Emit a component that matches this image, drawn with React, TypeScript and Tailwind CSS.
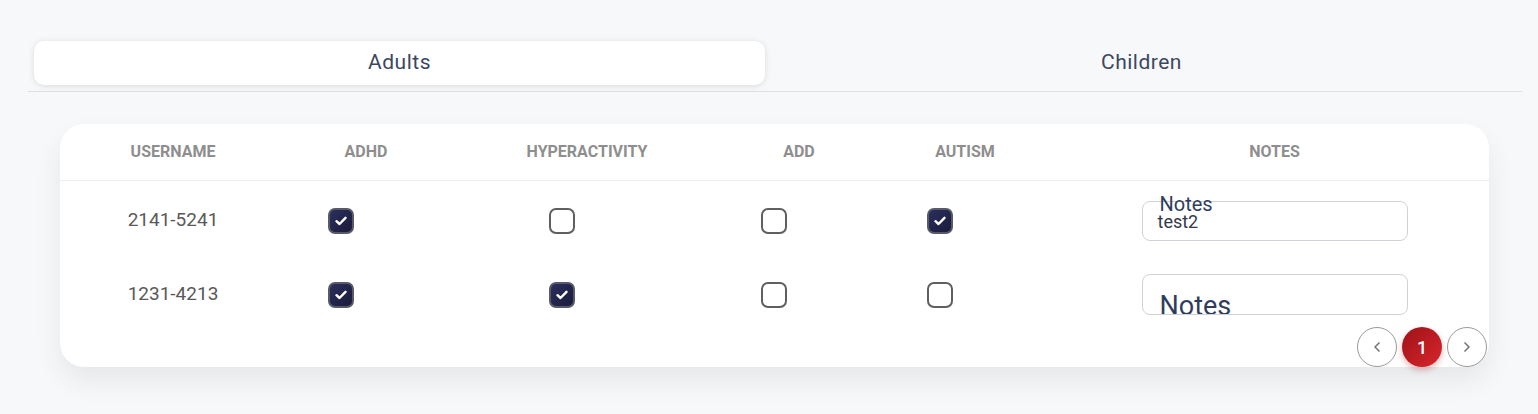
import { ChevronLeft, ChevronRight } from 'lucide-react';

type Row = {
  username: string;
  adhd: boolean;
  hyper: boolean;
  add: boolean;
  autism: boolean;
  notes: string;
};

const rows: Row[] = [
  { username: '2141-5241', adhd: true, hyper: false, add: false, autism: true, notes: 'test2' },
  { username: '1231-4213', adhd: true, hyper: true, add: false, autism: false, notes: '' },
];

const cols = 'grid grid-cols-[226px_160px_282px_142px_190px_1fr]';

function Check({ checked }: { checked: boolean }) {
  if (!checked) {
    return <div className="w-[26px] h-[26px] rounded-[7px] border-2 border-[#5f5f5f] bg-white mr-[50px]" />;
  }
  return (
    <div className="w-[26px] h-[26px] rounded-[7px] border-2 border-[#585a68] bg-gradient-to-br from-[#2b2f5e] to-[#1a1c3a] mr-[50px] flex items-center justify-center">
      <svg width="12" height="10" viewBox="0 0 12 10" fill="none">
        <path d="M1.5 5.2 L4.5 8 L10.5 1.8" stroke="white" strokeWidth="2.4" strokeLinecap="round" strokeLinejoin="round" />
      </svg>
    </div>
  );
}

function NotesField({ value }: { value: string }) {
  if (value) {
    return (
      <div className="relative w-[266px] h-[40px] rounded-[8px] border border-[#cfd2d6] bg-white">
        <span className="absolute left-[17px] -top-[8px] text-[20px] leading-none text-[#2f3d5c]">Notes</span>
        <span className="absolute left-[15px] top-[11px] text-[18px] leading-none text-[#323a4a]">{value}</span>
      </div>
    );
  }
  return (
    <div className="relative w-[266px] h-[41px] rounded-[8px] border border-[#cfd2d6] bg-white overflow-hidden">
      <span className="absolute left-[17px] top-[18px] text-[27px] leading-none text-[#2f3d5c]">Notes</span>
    </div>
  );
}

export default function App() {
  return (
    <div className="min-h-[414px] bg-[#f7f8fa] font-['Roboto',sans-serif] pt-[41px] px-[28px]">
      <div className="w-[1494px] border-b border-[#dcdfe3] pb-[6px]">
        <div className="flex gap-[11px] px-[6px]">
          <button className="w-[731px] h-[44px] rounded-[10px] bg-white shadow-[0_1px_6px_rgba(0,0,0,0.12)] text-[21px] tracking-[0.5px] text-[#3b4760]">
            Adults
          </button>
          <button className="w-[731px] h-[44px] rounded-[10px] text-[21px] tracking-[0.5px] text-[#3b4760]">
            Children
          </button>
        </div>
      </div>

      <div className="mt-[32px] ml-[32px] w-[1429px] bg-white rounded-[24px] shadow-[0_14px_28px_rgba(0,0,0,0.07)]">
        <div className={`${cols} h-[57px] items-center border-b border-[#ececec] text-[16px] font-bold text-[#8e8e8e] text-center`}>
          <div>USERNAME</div>
          <div>ADHD</div>
          <div>HYPERACTIVITY</div>
          <div>ADD</div>
          <div>AUTISM</div>
          <div>NOTES</div>
        </div>
        {rows.map((r, i) => (
          <div key={r.username} className={`${cols} items-center ${i === 0 ? 'h-[79px]' : 'h-[69px]'}`}>
            <div className="text-center text-[19px] text-[#595959]">{r.username}</div>
            <div className="flex justify-center"><Check checked={r.adhd} /></div>
            <div className="flex justify-center"><Check checked={r.hyper} /></div>
            <div className="flex justify-center"><Check checked={r.add} /></div>
            <div className="flex justify-center"><Check checked={r.autism} /></div>
            <div className="flex justify-center"><NotesField value={r.notes} /></div>
          </div>
        ))}
        <div className="flex justify-end gap-[5px] pr-[2px] -mt-[2px] h-[40px]">
          <button className="w-[40px] h-[40px] rounded-full border border-[#9a9a9a] bg-white flex items-center justify-center text-[#777]">
            <ChevronLeft size={16} strokeWidth={2.5} />
          </button>
          <button className="w-[40px] h-[40px] rounded-full bg-gradient-to-br from-[#9e1218] to-[#d9262c] shadow-[0_3px_6px_rgba(160,20,25,0.3)] text-white text-[18px] font-medium flex items-center justify-center">
            1
          </button>
          <button className="w-[40px] h-[40px] rounded-full border border-[#9a9a9a] bg-white flex items-center justify-center text-[#777]">
            <ChevronRight size={16} strokeWidth={2.5} />
          </button>
        </div>
      </div>
    </div>
  );
}
